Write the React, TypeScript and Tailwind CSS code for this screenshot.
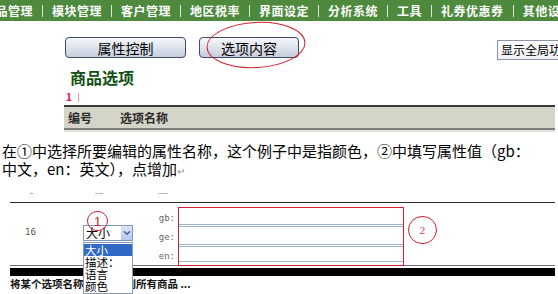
import { Fragment } from 'react'
import { ChevronDown } from 'lucide-react'

// ── Data ──────────────────────────────────────────────────────────────────────

const NAV = ['商品管理', '模块管理', '客户管理', '地区税率', '界面设定', '分析系统', '工具', '礼券优惠券', '其他设置']
const OPTIONS = ['大小', '描述：', '语言', '颜色']

// ── Top screenshot (admin page) ───────────────────────────────────────────────

function AdminShot() {
  return (
    <div className="relative">
      {/* green nav */}
      <div className="ml-[-17px] flex h-[21px] items-center whitespace-nowrap bg-[#4d8a3d] text-[12px] font-bold tracking-[0.5px] text-white">
        {NAV.map((n, i) => (
          <Fragment key={n}>
            {i > 0 && <span className="mx-[9px] h-[12px] w-px shrink-0 bg-white/80" />}
            <span className="shrink-0 leading-[12px]">{n}</span>
          </Fragment>
        ))}
      </div>

      {/* buttons */}
      <div className="mt-[16px] flex items-start whitespace-nowrap pl-[65px]">
        <div className="flex h-[21px] w-[121px] shrink-0 items-center justify-center rounded-[4px] border border-[#3e4a66] bg-linear-to-b from-[#f6f8fb] to-[#c6cedd] text-[14px] leading-[14px]">
          属性控制
        </div>
        <div className="ml-[13px] flex h-[21px] w-[100px] shrink-0 items-center justify-center rounded-[4px] border border-[#3e4a66] bg-linear-to-b from-[#f6f8fb] to-[#c6cedd] text-[14px] leading-[14px]">
          选项内容
        </div>
        <div className="ml-[198px] mt-[3px] flex h-[20px] shrink-0 items-center border border-[#8a96a8] bg-linear-to-b from-white to-[#eef0f4] pl-[3px] pr-2 text-[12px] leading-[12px]">
          显示全局功能
        </div>
      </div>

      <div className="mt-[8px] pl-[70px] text-[16px] font-bold leading-[18px] text-[#0f4f12]">商品选项</div>

      <div className="mt-[6px] flex h-[10px] items-center gap-[6px] pl-[66px]">
        <span className="text-[10px] font-bold leading-[10px] text-[#d0103a]">1</span>
        <span className="h-[9px] w-px bg-[#e89aa6]" />
      </div>

      {/* table header */}
      <div className="ml-[64px] mt-[3px] w-[491px]">
        <div className="flex h-[25px] items-center border-y-2 border-t-[#3a3a3a] border-b-[#7c7c78] bg-[#d5d4c8] text-[12px] font-bold leading-[12px] text-[#2a2a2a]">
          <span className="w-[56px] pl-[4px]">编号</span>
          <span>选项名称</span>
        </div>
        <div className="h-[2px] bg-[#e4e4de]" />
      </div>

      {/* ellipse annotation */}
      <svg className="absolute left-[204px] top-[20px]" width="106" height="50" viewBox="0 0 106 50">
        <ellipse cx="52" cy="25" rx="49" ry="22.5" fill="none" stroke="#d2202e" strokeWidth="1" transform="rotate(-3 52 25)" />
      </svg>
    </div>
  )
}

// ── Bottom screenshot (option values) ─────────────────────────────────────────

function OptionShot() {
  return (
    <div className="ml-[10px] w-[545px]">
      <div className="relative flex h-[64px] border-y border-t-[#2a2a2a] border-b-[#707070]">
        <div className="w-[73px] pl-[15px] pt-[24px] font-['DejaVu_Sans_Mono',monospace] text-[9px] leading-[10px] text-[#555]">16</div>

        {/* select */}
        <div className="w-[50px] pt-[22px]">
          <div className="flex h-[16px] items-center border border-[#7f9db9] bg-white">
            <span className="flex-1 pl-[2px] text-[12px] leading-[12px]">大小</span>
            <span className="flex h-[14px] w-[11px] items-center justify-center bg-linear-to-b from-[#dbe6fd] to-[#b3c8f5]">
              <ChevronDown size={10} strokeWidth={3.5} className="text-[#4d6185]" />
            </span>
          </div>
        </div>

        {/* labels */}
        <div className="flex w-[45px] flex-col items-end pr-[3px] pt-[6px] font-['DejaVu_Sans_Mono',monospace] text-[9px] text-[#666]">
          <span className="h-[19px] leading-[19px]">gb:</span>
          <span className="h-[19px] leading-[19px]">ge:</span>
          <span className="h-[19px] leading-[19px]">en:</span>
        </div>

        {/* inputs */}
        <div className="mt-[4px] flex h-[59px] w-[226px] flex-col border border-[#d0202a] bg-white">
          <div className="h-[17px] border-b border-[#9fb5cc]" />
          <div className="mt-px h-[19px] border-y border-[#9fb5cc]" />
          <div className="mt-px h-[16px] border-y border-[#9fb5cc]" />
        </div>

        {/* dropdown list */}
        <div className="absolute left-[73px] top-[39px] z-10 flex w-[50px] flex-col border border-[#8d9bb0] bg-white py-px text-[11.5px] leading-[12px]">
          {OPTIONS.map((o, i) => (
            <span key={o} className={i === 0 ? 'bg-[#316ac5] pl-[1px] text-white' : 'pl-[1px] text-black'}>{o}</span>
          ))}
        </div>

        {/* annotations */}
        <div className="absolute left-[77px] top-[8px] flex h-[20px] w-[21px] items-center justify-center rounded-full border border-[#c8202c] font-['Liberation_Sans',sans-serif] text-[13px] leading-[13px] text-[#d0202a]">1</div>
        <div className="absolute left-[398px] top-[13px] flex h-[28px] w-[29px] items-center justify-center rounded-full border border-[#c8202c] font-['Liberation_Serif',serif] text-[11px] leading-[11px] text-[#e0304a]">2</div>
      </div>

      <div className="mt-[2px] h-[8px] bg-black" />
      <div className="mt-[2px] whitespace-nowrap text-[10.5px] font-bold leading-[12px] text-[#111]">将某个选项名称同步应用到所有商品 ...</div>
    </div>
  )
}

// ── App ───────────────────────────────────────────────────────────────────────

export default function App() {
  return (
    <div className="relative h-[294px] w-[558px] overflow-hidden bg-white font-['Noto_Sans_CJK_SC',sans-serif] text-black">
      <AdminShot />

      <div className="mt-[10px] px-[2px] text-[15px] leading-[18px]">
        <div className="whitespace-nowrap">在①中选择所要编辑的属性名称，这个例子中是指颜色，②中填写属性值（gb：</div>
        <div className="whitespace-nowrap">中文，en：英文），点增加<span className="text-[10px] text-[#999]">↵</span></div>
      </div>

      {/* cut-off text tops */}
      <div className="flex h-[22px] items-start pt-[13px]">
        <span className="ml-[30px] h-px w-[3px] bg-[#aaa]" />
        <span className="ml-[62px] h-px w-[8px] bg-[#bbb]" />
        <span className="ml-[55px] h-px w-[10px] bg-[#bbb]" />
      </div>

      <OptionShot />
    </div>
  )
}
